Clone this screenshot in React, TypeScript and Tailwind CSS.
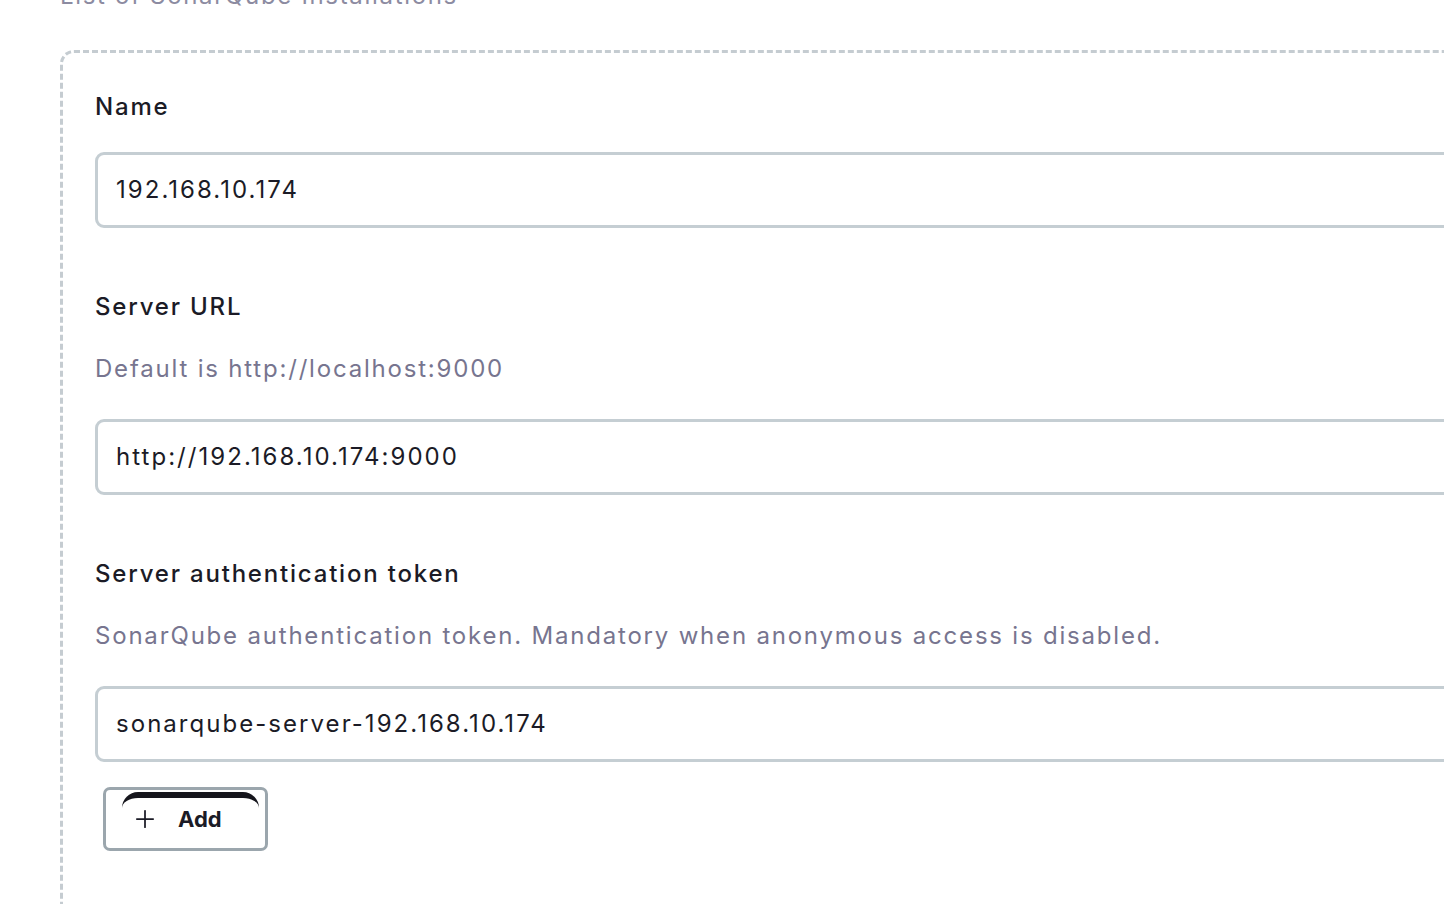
import { Plus } from 'lucide-react'

type FieldProps = {
  label: string
  description?: string
  value: string
  first?: boolean
}

function Field({ label, description, value, first }: FieldProps) {
  return (
    <div className={first ? 'flex flex-col' : 'flex flex-col mt-[61px]'}>
      <label className="h-9 leading-9 text-[24px] font-medium tracking-[0.075em] text-[#1b1b26]">{label}</label>
      {description && (
        <p className="mt-[26px] h-9 leading-9 text-[24px] tracking-[0.075em] text-[#77758f]">{description}</p>
      )}
      <div
        className={
          (description ? 'mt-[32px] ' : 'mt-[27px] ') +
          'h-[76px] w-[1400px] flex items-center rounded-[9px] border-[3px] border-[#c5ced3] bg-white pl-[18px]'
        }
      >
        <span className="text-[24px] tracking-[0.085em] text-[#1b1b26]">{value}</span>
      </div>
    </div>
  )
}

export default function App() {
  return (
    <div
      className="w-[1444px] h-[904px] overflow-hidden bg-white"
      style={{ fontFamily: 'Inter, "Noto Sans", sans-serif' }}
    >
      <div className="flex flex-col pl-[60px]">
        <h2 className="mt-[-22px] mb-[36px] h-9 leading-9 text-[24px] tracking-[0.07em] text-[#8c8ba1]">
          List of SonarQube Installations
        </h2>
        <div className="w-[1500px] h-[900px] rounded-[14px] border-[3px] border-dashed border-[#c5ccd1] pt-[36px] pl-[32px]">
          <Field first label="Name" value="192.168.10.174" />
          <Field
            label="Server URL"
            description="Default is http://localhost:9000"
            value="http://192.168.10.174:9000"
          />
          <Field
            label="Server authentication token"
            description="SonarQube authentication token. Mandatory when anonymous access is disabled."
            value="sonarqube-server-192.168.10.174"
          />
          <button className="relative mt-[25px] ml-[8px] flex h-[64px] w-[165px] items-center rounded-[7px] border-[3px] border-[#9ba6ad] bg-white pl-[25px]">
            <span className="absolute left-[16px] top-[2px] h-[18px] w-[137px] rounded-t-[16px] border-t-[6px] border-[#15151c]" />
            <Plus className="h-[28px] w-[28px] text-[#1b1b26]" strokeWidth={1.5} />
            <span className="ml-[19px] text-[22px] font-bold text-[#1b1b26]">Add</span>
          </button>
        </div>
      </div>
    </div>
  )
}
